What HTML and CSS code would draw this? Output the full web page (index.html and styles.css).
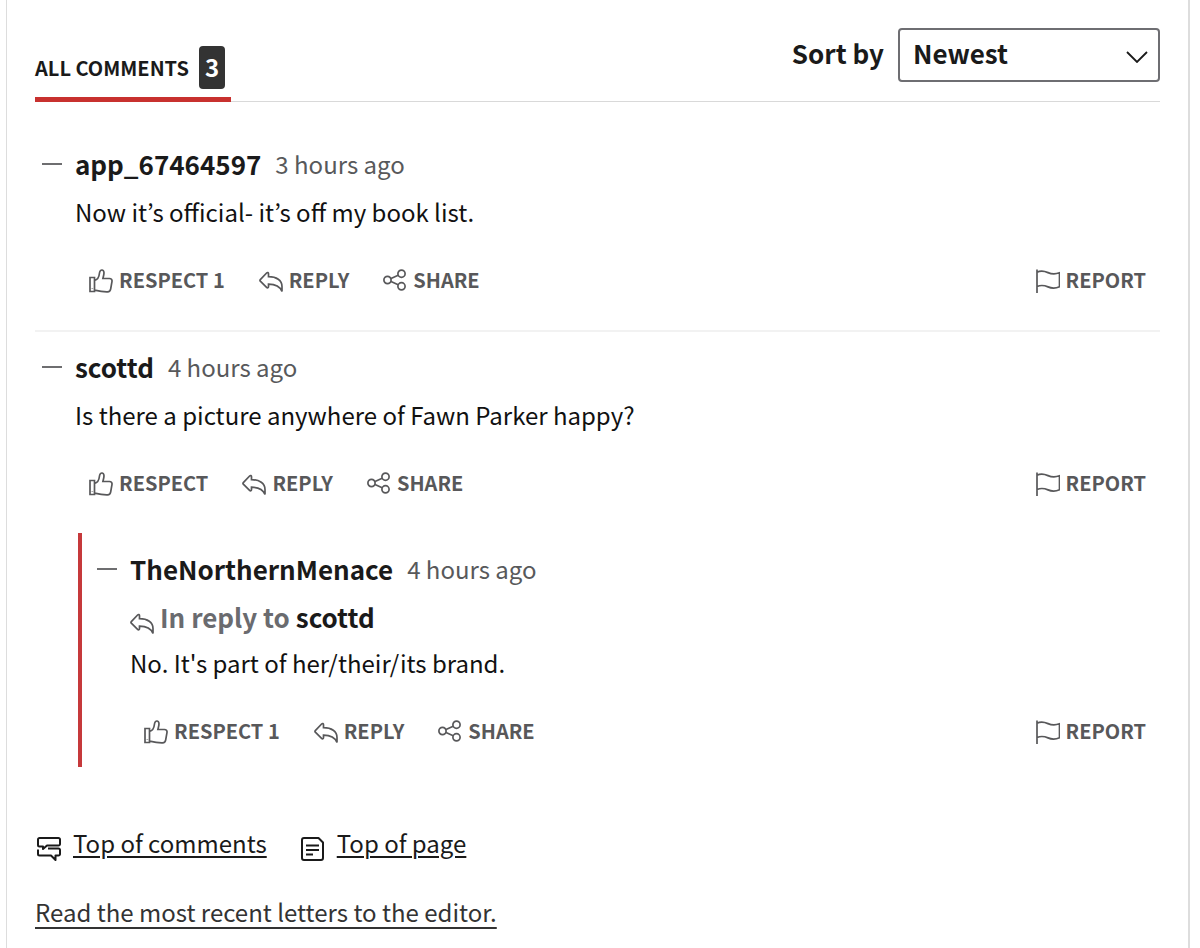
FILE: index.html
```html
<!DOCTYPE html>
<html lang="en">
<head>
<meta charset="utf-8">
<meta name="viewport" content="width=device-width, initial-scale=1">
<title>Comments</title>
<link rel="stylesheet" href="styles.css">
</head>
<body>
<svg class="sprite" aria-hidden="true">
  <symbol id="thumb" viewBox="0 0 24 24"><path d="M1 8.500h4.500v14H1zM3.300 19.500v.5M5.500 11.500c3.300-.8 4.500-3 4.900-7C10.600 2 11.800.8 13.200 1c2 .4 2 3 1.400 5.500L13.900 9.500h6.600c1.700 0 2.700 1.200 2.500 2.800l-1.300 7.500c-.3 2-1.300 3-3.200 3.100-4 .1-7-.3-13-1.700"/></symbol>
  <symbol id="reply" viewBox="0 0 24 24"><path d="M1.300 10.700 7.600 4c.9-.9 1.900-.4 1.900.8v2.800c8 0 13.500 3.700 13.500 9.900v5c-1.800-4.500-5.500-7.300-13.500-7.300v2.400c0 1.300-1 1.700-1.900.8L1.300 12.100q-.7-.7 0-1.400z"/></symbol>
  <symbol id="share" viewBox="0 0 24 24"><circle cx="4.500" cy="11" r="3.600"/><circle cx="18.500" cy="4.700" r="3.600"/><circle cx="18.500" cy="17.300" r="3.600"/><path d="m8 9.500 7.200-3.200M8 12.500l7.200 3.200"/></symbol>
  <symbol id="flag" viewBox="0 0 24 24"><path d="M1 .500v23.500M1 3.200C5 1.200 8 1.800 12 3.600s7 1.900 11.500.2v14c-4.500 2-7.500 1.900-11.500.1S5 15.800 1 17.500"/></symbol>
</svg>
<main class="panel">
  <header class="head">
    <h2 class="tab">ALL COMMENTS <span class="count">3</span></h2>
    <div class="sort">
      <label for="sort">Sort by</label>
      <div class="picker">
        <select id="sort"><option>Newest</option></select>
        <svg class="chevron" viewBox="0 0 22 12" aria-hidden="true"><path d="m1 1 10 10L21 1"/></svg>
      </div>
    </div>
  </header>

  <article class="comment">
    <button class="toggle" aria-label="Collapse"></button>
    <div class="body">
      <div class="meta"><span class="name">app_67464597</span><time class="time">3 hours ago</time></div>
      <p class="text">Now it’s official- it’s off my book list.</p>
      <div class="actions">
        <button class="action"><svg class="icon"><use href="#thumb"/></svg>RESPECT 1</button>
        <button class="action"><svg class="icon"><use href="#reply"/></svg>REPLY</button>
        <button class="action"><svg class="icon"><use href="#share"/></svg>SHARE</button>
        <button class="action report"><svg class="icon"><use href="#flag"/></svg>REPORT</button>
      </div>
    </div>
  </article>

  <article class="comment">
    <button class="toggle" aria-label="Collapse"></button>
    <div class="body">
      <div class="meta"><span class="name">scottd</span><time class="time">4 hours ago</time></div>
      <p class="text">Is there a picture anywhere of Fawn Parker happy?</p>
      <div class="actions">
        <button class="action"><svg class="icon"><use href="#thumb"/></svg>RESPECT</button>
        <button class="action"><svg class="icon"><use href="#reply"/></svg>REPLY</button>
        <button class="action"><svg class="icon"><use href="#share"/></svg>SHARE</button>
        <button class="action report"><svg class="icon"><use href="#flag"/></svg>REPORT</button>
      </div>
    </div>
  </article>

  <article class="comment nested">
    <button class="toggle" aria-label="Collapse"></button>
    <div class="body">
      <div class="meta"><span class="name">TheNorthernMenace</span><time class="time">4 hours ago</time></div>
      <div class="parent"><svg class="icon"><use href="#reply"/></svg><span>In reply to</span><span class="name">scottd</span></div>
      <p class="text">No. It's part of her/their/its brand.</p>
      <div class="actions">
        <button class="action"><svg class="icon"><use href="#thumb"/></svg>RESPECT 1</button>
        <button class="action"><svg class="icon"><use href="#reply"/></svg>REPLY</button>
        <button class="action"><svg class="icon"><use href="#share"/></svg>SHARE</button>
        <button class="action report"><svg class="icon"><use href="#flag"/></svg>REPORT</button>
      </div>
    </div>
  </article>

  <nav class="jumps">
    <div class="jump">
      <svg class="mark" viewBox="0 0 28 28" aria-hidden="true"><path d="M6 11.500H4.500A1.500 1.500 0 0 1 3 10V4.500A1.500 1.500 0 0 1 4.500 3h19A1.500 1.500 0 0 1 25 4.500V9a1.500 1.500 0 0 1-1.500 1.500H12L8 14v-2.500H6M3 14.500V19a1.500 1.500 0 0 0 1.500 1.500H16l4.500 4.500v-4.500h3A1.500 1.500 0 0 0 25 19v-4a1.500 1.500 0 0 0-1.500-1.500H13"/></svg>
      <a href="#sort">Top of comments</a>
    </div>
    <div class="jump">
      <svg class="mark" viewBox="0 0 28 28" aria-hidden="true"><path d="M5 3h14.500L24 7.500V23a2 2 0 0 1-2 2H5a2 2 0 0 1-2-2V5a2 2 0 0 1 2-2zM7 10.500h13M7 15h13M7 19.500h7"/></svg>
      <a href="#sort">Top of page</a>
    </div>
  </nav>
  <a class="letters" href="#sort">Read the most recent letters to the editor.</a>
</main>
</body>
</html>
```
FILE: styles.css
```css
* { box-sizing: border-box; }

body {
  margin: 0;
  background: #fff;
  color: #1a1a1a;
  font-family: "Noto Sans CJK KR", "Noto Sans", sans-serif;
  font-size: 24px;
  line-height: 36px;
}

button, select { font: inherit; color: inherit; }
a { color: inherit; text-underline-offset: 3px; text-decoration-thickness: 2px; }

.sprite { display: none; }

.panel {
  min-height: 100vh;
  margin: 0 10px 0 6px;
  padding: 28px 28px 16px;
  border: solid #ddd;
  border-width: 0 2px 0 1px;
}

.head {
  display: flex;
  justify-content: space-between;
  align-items: flex-start;
  height: 74px;
  border-bottom: 1px solid #d9d9d9;
}

.tab {
  display: flex;
  align-items: center;
  align-self: flex-end;
  gap: 10px;
  margin: 0 0 -1px;
  padding: 0 6px 8px 0;
  border-bottom: 5px solid #c8312f;
  font-size: 20px;
  font-weight: 700;
}

.count {
  padding: 3px 6px 4px;
  border-radius: 4px;
  background: #333;
  color: #fff;
  font-size: 24px;
}

.sort {
  display: flex;
  align-items: center;
  gap: 14px;
  font-size: 26px;
  font-weight: 700;
}

.sort label { padding-bottom: 4px; }

.picker { position: relative; }

.picker select {
  display: block;
  width: 262px;
  height: 54px;
  padding: 0 13px 4px;
  border: 2px solid #6e6e72;
  border-radius: 4px;
  background: #fff;
  appearance: none;
}

.chevron {
  position: absolute;
  top: 23px;
  right: 12px;
  width: 22px;
  height: 12px;
  fill: none;
  stroke: #1a1a1a;
  stroke-width: 1.8;
}

.comment { display: flex; padding: 17px 0 32px; }
.head + .comment { padding: 44px 0 32px; border-bottom: 2px solid #f2f2f2; }

.toggle {
  flex: none;
  width: 40px;
  height: 36px;
  padding: 0 13px 1px 7px;
  border: 0;
  background: none;
}

.toggle::before {
  content: "";
  display: block;
  height: 2px;
  background: #6e6e70;
}

.body { flex: 1; min-width: 0; }
.meta { display: flex; gap: 14px; }
.name { color: #1a1a1a; font-size: 26px; font-weight: 700; }
.time { color: #58595b; }
.text { margin: 12px 0 32px; color: #111; }

.actions {
  display: flex;
  gap: 34px;
  padding: 0 14px;
}

.action {
  display: flex;
  align-items: center;
  gap: 6px;
  padding: 0;
  border: 0;
  background: none;
  color: #58585a;
  font-size: 20px;
  font-weight: 700;
}

.report { margin-left: auto; }

.icon {
  flex: none;
  width: 24px;
  height: 24px;
  fill: none;
  stroke: #58585a;
  stroke-width: 1.7;
  overflow: visible;
}

.action .icon { margin-top: 2px; }

.nested {
  margin-left: 43px;
  padding: 18px 0 18px 8px;
  border-left: 4px solid #c6393b;
}

.nested .text { margin-top: 10px; }

.parent {
  display: flex;
  gap: 6px;
  margin-top: 12px;
  color: #6a6b6f;
  font-size: 26px;
  font-weight: 700;
}

.parent .icon { align-self: flex-end; }

.jumps { display: flex; gap: 32px; margin: 58px 0 31px; }
.jump { display: flex; gap: 10px; }

.mark {
  width: 28px;
  height: 28px;
  margin-top: 10px;
  fill: none;
  stroke: #1a1a1a;
  stroke-width: 2;
  stroke-linejoin: round;
}

.letters { color: #333; text-underline-offset: 5px; }
```
